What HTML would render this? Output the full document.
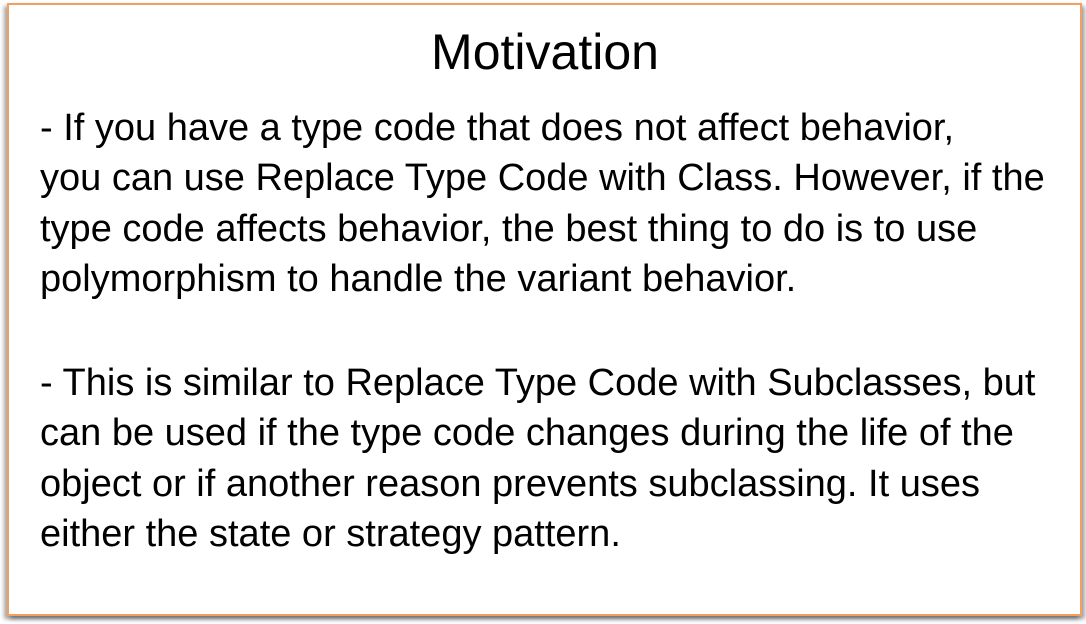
<!DOCTYPE html>
<html><head><style>
body{margin:0;width:1086px;height:624px;background:#fff;position:relative;overflow:hidden;font-family:"Liberation Sans",sans-serif;color:#000}
.box{position:absolute;left:7px;top:3px;width:1071px;height:609px;border:2px solid #f0a060;box-shadow:-3px 3px 4px rgba(0,0,0,.35),3px 3px 4px rgba(0,0,0,.35);background:#fff}
.t{position:absolute;left:0;width:1090px;text-align:center;top:27px;font-size:50px;line-height:50px}
.l{position:absolute;left:40px;font-size:38px;line-height:50px;white-space:nowrap}
</style></head><body>
<div class="box"></div>
<div class="t">Motivation</div>
<div class="l" style="top:103px">- If you have a type code that does not affect behavior,</div>
<div class="l" style="top:153px">you can use Replace Type Code with Class. However, if the</div>
<div class="l" style="top:204px">type code affects behavior, the best thing to do is to use</div>
<div class="l" style="top:254px">polymorphism to handle the variant behavior.</div>
<div class="l" style="top:358px">- This is similar to Replace Type Code with Subclasses, but</div>
<div class="l" style="top:408px">can be used if the type code changes during the life of the</div>
<div class="l" style="top:459px">object or if another reason prevents subclassing. It uses</div>
<div class="l" style="top:509px">either the state or strategy pattern.</div>
</body></html>
